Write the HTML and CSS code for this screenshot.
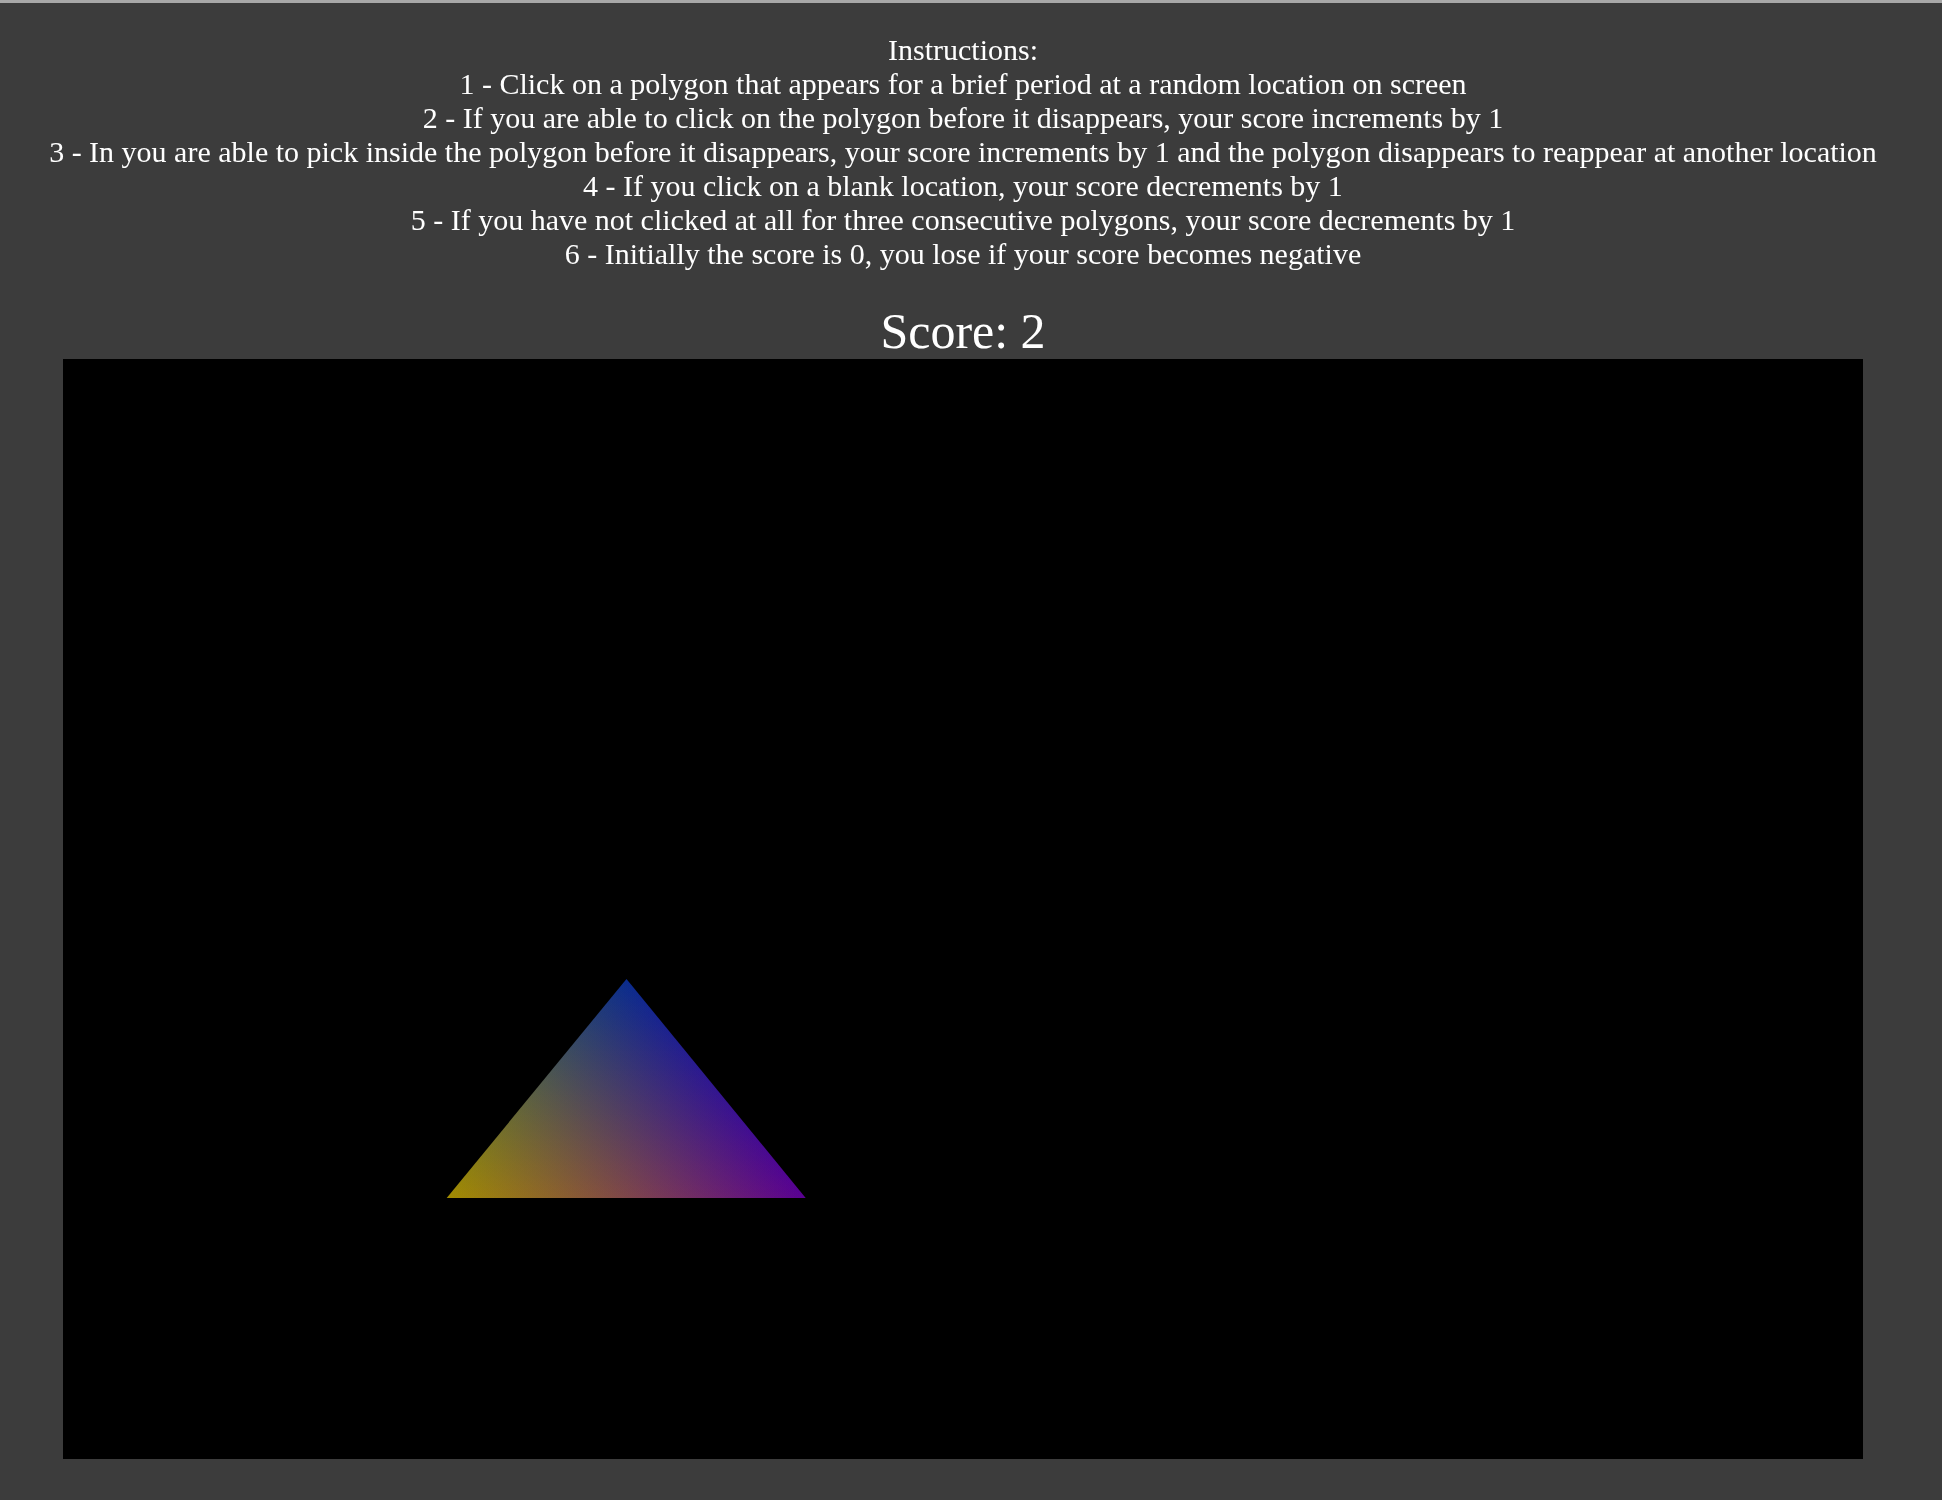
FILE: index.html
```html
<!DOCTYPE html>
<html>
<head>
<meta charset="utf-8">
<title>Polygon Game</title>
<link rel="stylesheet" href="styles.css">
</head>
<body>
<div class="topline"></div>
<div class="page">
  <div class="instructions">
    <div>Instructions:</div>
    <div>1 - Click on a polygon that appears for a brief period at a random location on screen</div>
    <div>2 - If you are able to click on the polygon before it disappears, your score increments by 1</div>
    <div>3 - In you are able to pick inside the polygon before it disappears, your score increments by 1 and the polygon disappears to reappear at another location</div>
    <div>4 - If you click on a blank location, your score decrements by 1</div>
    <div>5 - If you have not clicked at all for three consecutive polygons, your score decrements by 1</div>
    <div>6 - Initially the score is 0, you lose if your score becomes negative</div>
  </div>
  <div class="score">Score: 2</div>
  <div class="canvas">
    <svg class="scene" viewBox="0 0 1800 1100" width="1800" height="1100">
      <defs>
        <linearGradient id="gA" gradientUnits="userSpaceOnUse" x1="563.5" y1="620" x2="563.5" y2="839">
          <stop offset="0" stop-color="#0a2c8e"/>
          <stop offset="1" stop-color="#000000"/>
        </linearGradient>
        <linearGradient id="gB" gradientUnits="userSpaceOnUse" x1="383.7" y1="839" x2="598.7" y2="663">
          <stop offset="0" stop-color="#a28c00"/>
          <stop offset="1" stop-color="#000000"/>
        </linearGradient>
        <linearGradient id="gC" gradientUnits="userSpaceOnUse" x1="742.7" y1="839" x2="528.3" y2="663">
          <stop offset="0" stop-color="#5a0092"/>
          <stop offset="1" stop-color="#000000"/>
        </linearGradient>
      </defs>
      <g class="tri">
        <polygon class="layer" points="563.5,620 383.7,839 742.7,839" fill="url(#gA)"/>
        <polygon class="layer" points="563.5,620 383.7,839 742.7,839" fill="url(#gB)"/>
        <polygon class="layer" points="563.5,620 383.7,839 742.7,839" fill="url(#gC)"/>
      </g>
    </svg>
  </div>
</div>
</body>
</html>
```

FILE: styles.css
```css
html {
  background: #3c3c3c;
}
body {
  margin: 0;
  background: #3c3c3c;
  color: #ffffff;
  font-family: "Liberation Serif", "Times New Roman", serif;
}
.topline {
  height: 3px;
  background: #a8a8a8;
}
.page {
  width: 1926px;
  padding-top: 30px;
  padding-bottom: 41px;
  display: flex;
  flex-direction: column;
  align-items: center;
}
.instructions {
  font-size: 30px;
  line-height: 34px;
  text-align: center;
}
.score {
  margin-top: 32px;
  font-size: 50px;
  line-height: 56px;
  text-align: center;
}
.canvas {
  width: 1800px;
  height: 1100px;
  background: #000000;
}
.scene {
  display: block;
}
.tri {
  isolation: isolate;
}
.layer {
  mix-blend-mode: plus-lighter;
}
```
